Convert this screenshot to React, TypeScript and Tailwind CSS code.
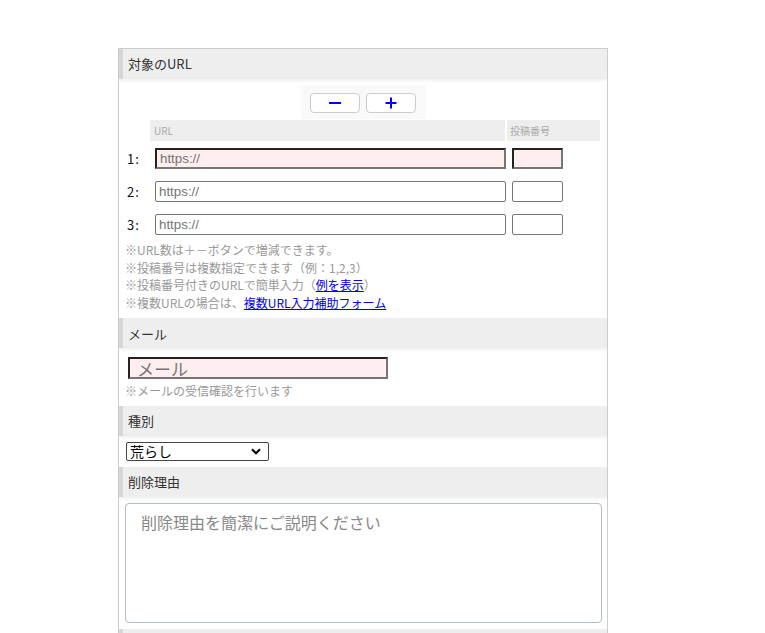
import React from "react";

const SectionHeader = ({ title }: { title: string }) => (
  <div className="h-[30px] bg-[#eeeeee] border-l-4 border-l-[#d6d6d6] pl-[5px] flex items-center text-[13px] text-[#333] shadow-[0_2px_3px_rgba(0,0,0,0.06)] relative">
    {title}
  </div>
);

const insetRequired =
  "border-2 border-t-[#222] border-l-[#222] border-r-[#767676] border-b-[#767676] bg-[#ffeeee]";
const normalInput = "border border-[#767676] rounded-[2px] bg-white";

export default function App() {
  const rows = [1, 2, 3];
  return (
    <div
      className="min-h-[633px] bg-white pt-[48px] pl-[118px]"
      style={{ fontFamily: '"Noto Sans CJK JP", "Noto Sans", sans-serif' }}
    >
      <div className="w-[490px] h-[585px] overflow-hidden border border-[#cccccc] border-b-0 bg-white">
        <SectionHeader title="対象のURL" />
        {/* buttons */}
        <div className="mt-[6px] mx-auto w-[125px] h-[34px] bg-[#f9f9f9] flex justify-center items-start pt-[8px] gap-[6px]">
          <button className="w-[50px] h-[20px] border border-[#cccccc] rounded-[4px] bg-white flex items-center justify-center">
            <svg width="16" height="4" viewBox="0 0 16 4">
              <rect x="2" y="1" width="12" height="2" fill="#0000ff" />
            </svg>
          </button>
          <button className="w-[50px] h-[20px] border border-[#cccccc] rounded-[4px] bg-white flex items-center justify-center">
            <svg width="14" height="14" viewBox="0 0 14 14">
              <rect x="1.5" y="6" width="11" height="2" fill="#0000ff" />
              <rect x="6" y="1.5" width="2" height="11" fill="#0000ff" />
            </svg>
          </button>
        </div>
        {/* table header */}
        <div className="mt-[1px] flex h-[21px] text-[10px] text-[#aaaaaa]">
          <div className="w-[31px]" />
          <div className="w-[355px] bg-[#eeeeee] pl-[4px] flex items-center">URL</div>
          <div className="w-[93px] ml-[2px] bg-[#eeeeee] pl-[3px] flex items-center">投稿番号</div>
        </div>
        {/* rows */}
        <div className="mt-[7px] flex flex-col gap-[12px]">
          {rows.map((n) => (
            <div key={n} className="flex items-center h-[21px]">
              <div className="w-[36px] pl-[8px] text-[13px] text-[#111] tracking-[1px]">{n}:</div>
              <input
                placeholder="https://"
                className={`w-[351px] h-[21px] px-[3px] text-[13.33px] placeholder:text-[#757575] outline-none ${
                  n === 1 ? insetRequired : normalInput
                }`}
                style={{ fontFamily: '"Liberation Sans", Arial, sans-serif' }}
              />
              <input
                className={`ml-[6px] w-[51px] h-[21px] px-[3px] text-[13.33px] outline-none ${
                  n === 1 ? insetRequired : normalInput
                }`}
              />
            </div>
          ))}
        </div>
        {/* notes */}
        <div className="mt-[6px] mb-[7px] pl-[6px] text-[12px] leading-[17.6px] text-[#999999]">
          <div>※URL数は＋－ボタンで増減できます。</div>
          <div>※投稿番号は複数指定できます（例：1,2,3）</div>
          <div>
            ※投稿番号付きのURLで簡単入力（
            <a href="#" className="text-[#0000ee] underline">
              例を表示
            </a>
            ）
          </div>
          <div>
            ※複数URLの場合は、
            <a href="#" className="text-[#0000ee] underline">
              複数URL入力補助フォーム
            </a>
          </div>
        </div>

        <SectionHeader title="メール" />
        <div className="pt-[9px] pl-[9px]">
          <input
            placeholder="メール"
            className={`block w-[260px] h-[22px] px-[7px] text-[17px] placeholder:text-[#757575] outline-none ${insetRequired}`}
          />
        </div>
        <div className="mt-[3px] mb-[6px] pl-[6px] text-[12px] leading-[17.6px] text-[#999999]">
          ※メールの受信確認を行います
        </div>

        <SectionHeader title="種別" />
        <div className="pt-[6px] pb-[6px] pl-[7px]">
          <div className="relative w-[143px] h-[19px]">
            <select className="block appearance-none w-[143px] h-[19px] border border-[#444] rounded-[2px] bg-white text-[14px] leading-[17px] text-black pl-[3px] py-0 outline-none">
              <option>荒らし</option>
            </select>
            <svg
              className="absolute right-[8px] top-[6px] pointer-events-none"
              width="10"
              height="7"
              viewBox="0 0 10 7"
            >
              <path d="M1 1.2 L5 5.2 L9 1.2" fill="none" stroke="#000" strokeWidth="2.2" />
            </svg>
          </div>
        </div>

        <SectionHeader title="削除理由" />
        <div className="pt-[6px] pl-[6px] pr-[5px] pb-[6px]">
          <textarea
            placeholder="削除理由を簡潔にご説明ください"
            className="block w-full h-[120px] resize-none border border-[#b0bec5] rounded-[4px] bg-white pt-[6px] px-[15px] text-[16px] leading-[24px] placeholder:text-[#888888] outline-none"
          />
        </div>
        <div className="h-[30px] bg-[#eeeeee] border-l-4 border-l-[#d6d6d6]" />
      </div>
    </div>
  );
}
